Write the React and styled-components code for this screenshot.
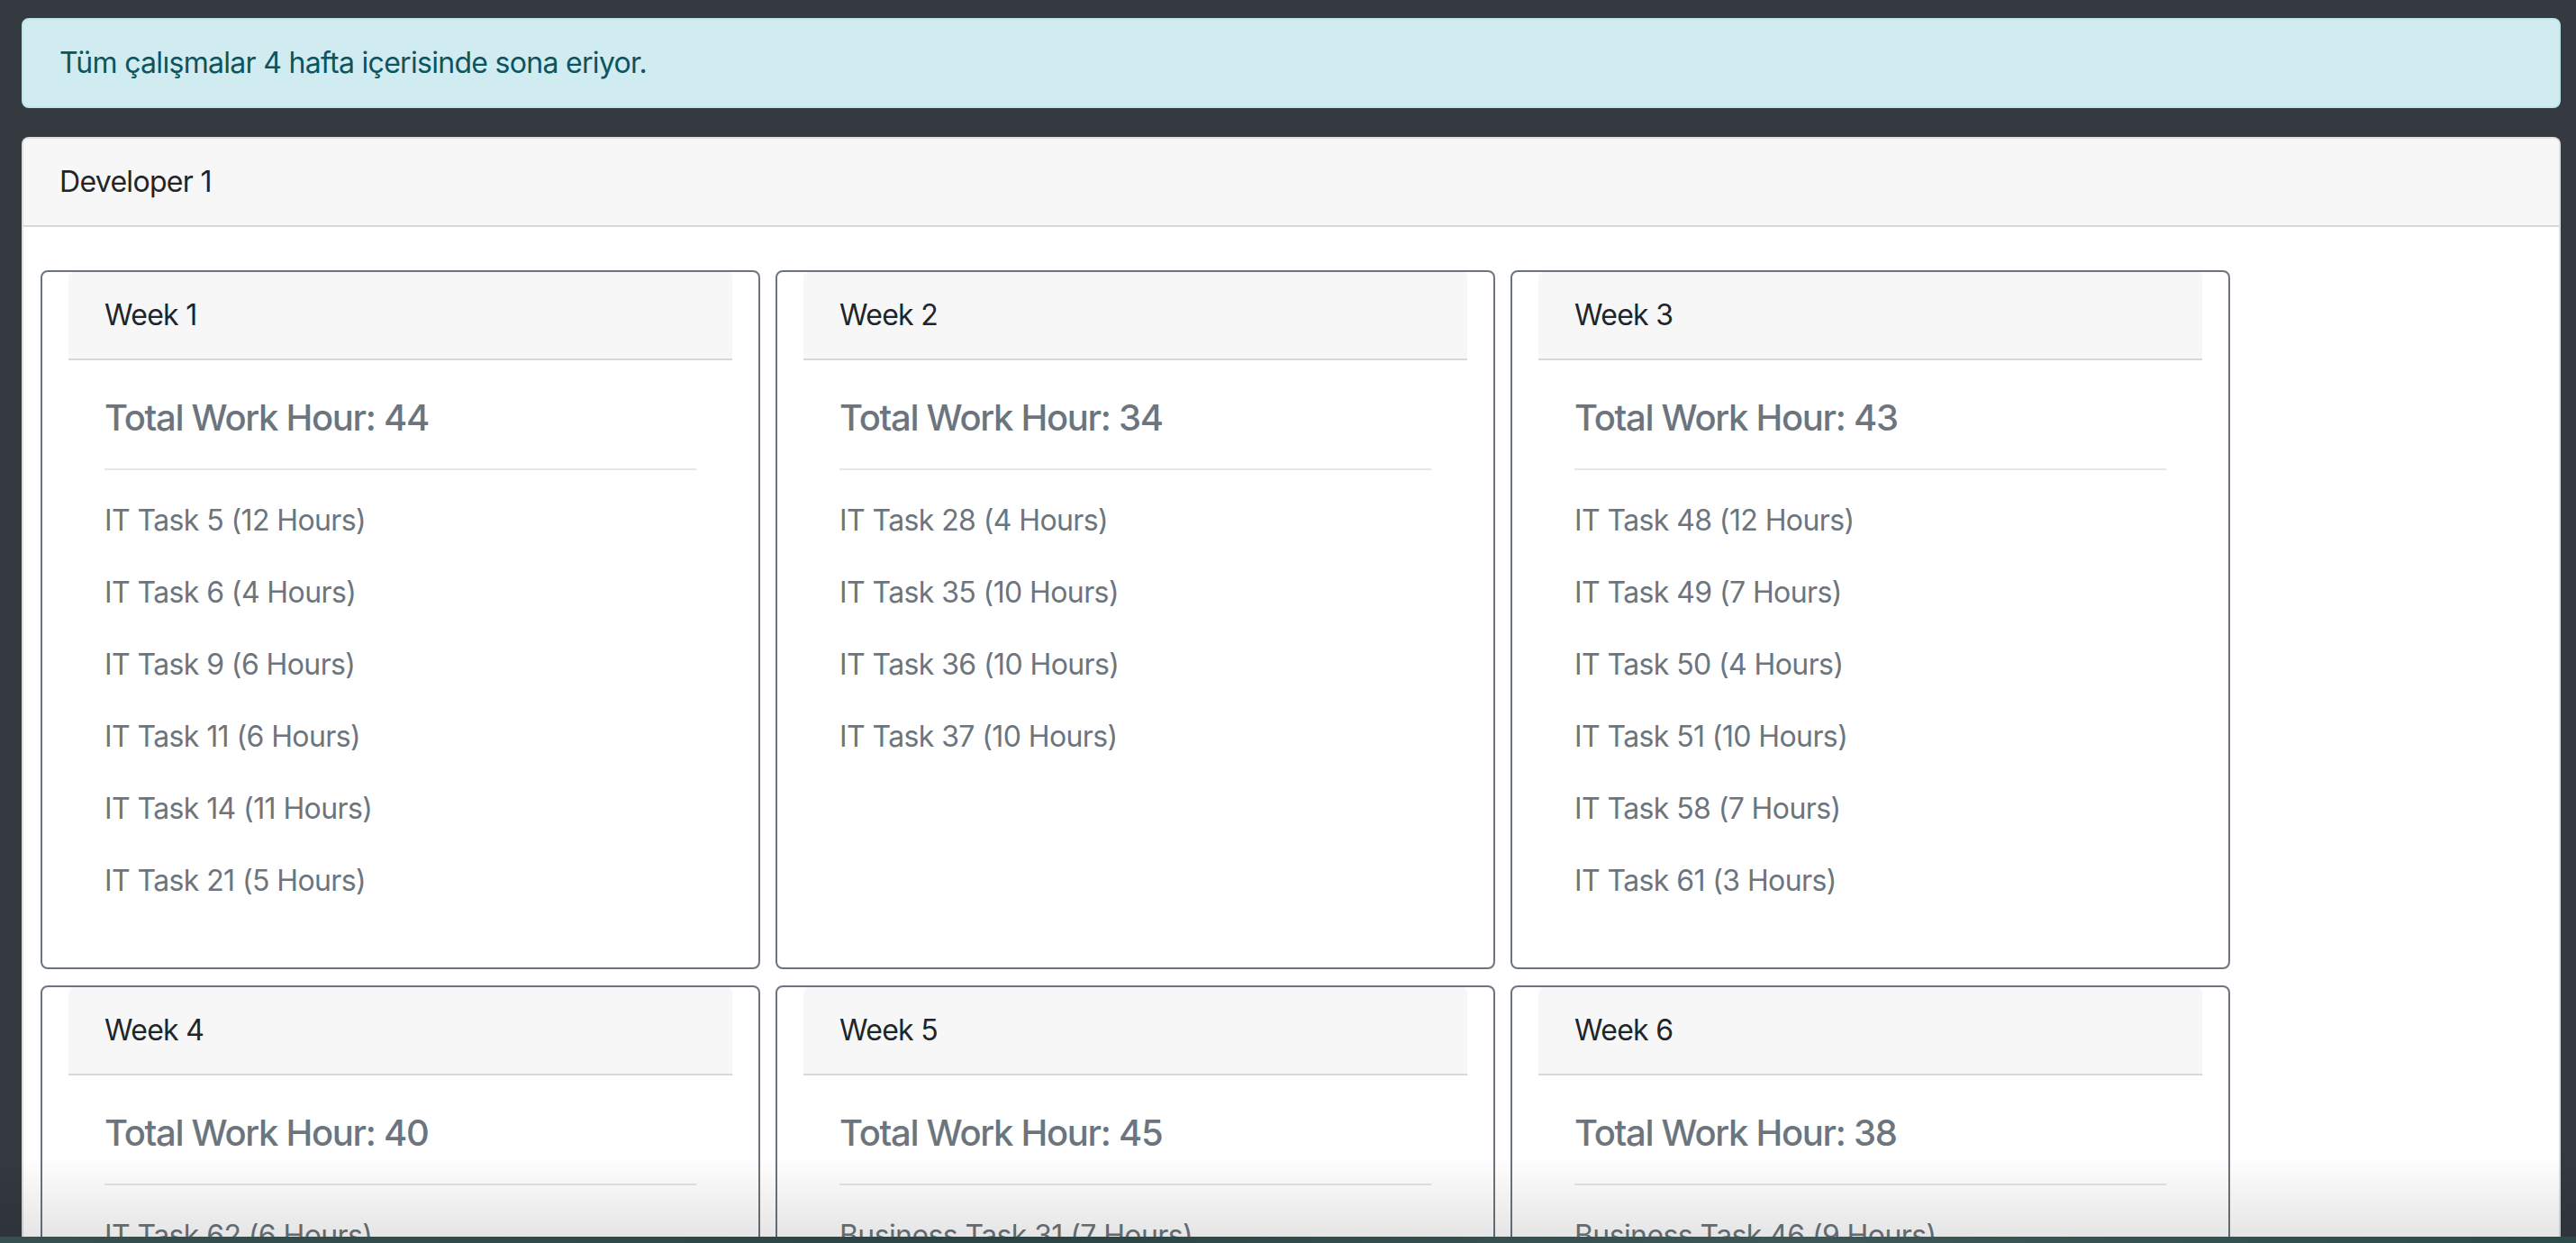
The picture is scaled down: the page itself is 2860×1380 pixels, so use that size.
import React from "react";
import styled, { createGlobalStyle } from "styled-components";

const weeks = [
  {
    title: "Week 1",
    total: 44,
    tasks: ["IT Task 5 (12 Hours)", "IT Task 6 (4 Hours)", "IT Task 9 (6 Hours)", "IT Task 11 (6 Hours)", "IT Task 14 (11 Hours)", "IT Task 21 (5 Hours)"],
  },
  {
    title: "Week 2",
    total: 34,
    tasks: ["IT Task 28 (4 Hours)", "IT Task 35 (10 Hours)", "IT Task 36 (10 Hours)", "IT Task 37 (10 Hours)"],
  },
  {
    title: "Week 3",
    total: 43,
    tasks: ["IT Task 48 (12 Hours)", "IT Task 49 (7 Hours)", "IT Task 50 (4 Hours)", "IT Task 51 (10 Hours)", "IT Task 58 (7 Hours)", "IT Task 61 (3 Hours)"],
  },
  {
    title: "Week 4",
    total: 40,
    tasks: ["IT Task 62 (6 Hours)", "IT Task 64 (10 Hours)", "IT Task 66 (8 Hours)", "IT Task 70 (9 Hours)", "IT Task 72 (7 Hours)"],
  },
  {
    title: "Week 5",
    total: 45,
    tasks: ["Business Task 31 (7 Hours)", "Business Task 33 (10 Hours)", "Business Task 35 (12 Hours)", "Business Task 38 (8 Hours)", "Business Task 40 (8 Hours)"],
  },
  {
    title: "Week 6",
    total: 38,
    tasks: ["Business Task 46 (9 Hours)", "Business Task 48 (10 Hours)", "Business Task 51 (11 Hours)", "Business Task 53 (8 Hours)"],
  },
];

export default function App() {
  return (
    <>
      <GlobalStyle />
      <Page>
        <Alert>Tüm çalışmalar 4 hafta içerisinde sona eriyor.</Alert>
        <Card>
          <CardHeader>Developer 1</CardHeader>
          <CardBody>
            <WeekGrid>
              {weeks.map((w) => (
                <WeekCard key={w.title}>
                  <WeekHeader>{w.title}</WeekHeader>
                  <WeekBody>
                    <Total>Total Work Hour: {w.total}</Total>
                    <Divider />
                    {w.tasks.map((t) => (
                      <Task key={t}>{t}</Task>
                    ))}
                  </WeekBody>
                </WeekCard>
              ))}
            </WeekGrid>
          </CardBody>
        </Card>
      </Page>
      {/* window shadow + desktop strip at the bottom edge */}
      <BottomFade />
      <Wallpaper />
    </>
  );
}

const GlobalStyle = createGlobalStyle`
  html, body {
    margin: 0;
    background: #343a40;
  }
  body {
    font-family: Inter, "Open Sans", "Liberation Sans", sans-serif;
    font-size: 32px;
    line-height: 48px;
    color: #212529;
    letter-spacing: -0.7px;
  }
  * { box-sizing: border-box; }
`;

const Page = styled.div`
  padding: 20px 17px 0 24px;
`;

//alert
const Alert = styled.div`
  background: #d1ecf1;
  border: 2px solid #bee5eb;
  border-radius: 8px;
  color: #0c5460;
  padding: 24px 40px;
  margin-bottom: 32px;
`;

//developer card
const Card = styled.div`
  background: #fff;
  border: 2px solid rgba(0, 0, 0, 0.125);
  border-radius: 8px;
  overflow: hidden;
`;

const CardHeader = styled.div`
  background: #f7f7f7;
  border-bottom: 2px solid rgba(0, 0, 0, 0.125);
  padding: 24px 40px;
`;

const CardBody = styled.div`
  padding: 48px 19px;
`;

const WeekGrid = styled.div`
  display: grid;
  grid-template-columns: repeat(3, 799px);
  column-gap: 17px;
  row-gap: 18px;
`;

//week card
const WeekCard = styled.div`
  border: 2px solid #6c757d;
  border-radius: 8px;
  padding: 0 29px;
  display: flex;
  flex-direction: column;
`;

const WeekHeader = styled.div`
  background: #f7f7f7;
  border-bottom: 2px solid rgba(0, 0, 0, 0.125);
  border-radius: 6px 6px 0 0;
  padding: 24px 40px;
`;

const WeekBody = styled.div`
  padding: 40px;
  flex: 1;
`;

const Total = styled.h5`
  margin: 0 0 16px;
  font-size: 40px;
  line-height: 48px;
  font-weight: 500;
  letter-spacing: -1.3px;
  color: #6c757d;
`;

const Divider = styled.hr`
  margin: 32px 0;
  border: 0;
  border-top: 2px solid rgba(0, 0, 0, 0.1);
`;

const Task = styled.p`
  margin: 0 0 32px;
  color: #6c757d;
  letter-spacing: -0.6px;
`;

const BottomFade = styled.div`
  position: fixed;
  left: 0;
  right: 0;
  bottom: 7px;
  height: 90px;
  pointer-events: none;
  background: linear-gradient(to bottom, rgba(0, 0, 0, 0), rgba(0, 0, 0, 0.1));
`;

const Wallpaper = styled.div`
  position: fixed;
  left: 0;
  right: 0;
  bottom: 0;
  height: 7px;
  background: linear-gradient(to right, #35504f, #2a4444 40%, #3b5756 70%, #2d4a4b);
`;
